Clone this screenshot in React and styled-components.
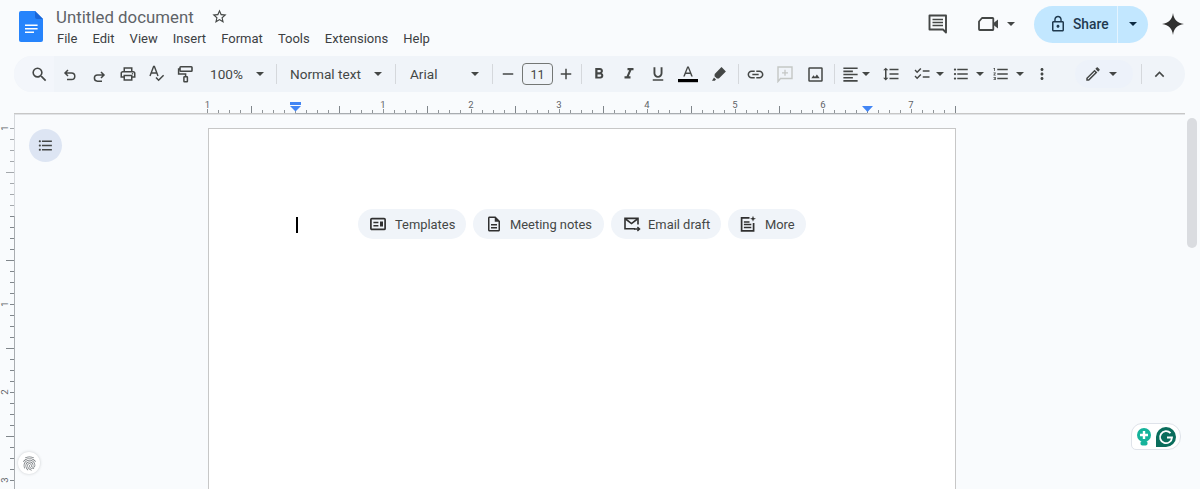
import React from "react";
import styled, { createGlobalStyle } from "styled-components";
import {
  MdSearch, MdOutlineLocalPrintshop, MdFormatBold, MdFormatItalic,
  MdFormatUnderlined, MdLink, MdFormatAlignLeft, MdFormatLineSpacing,
  MdOutlineChecklist, MdFormatListBulleted, MdFormatListNumbered, MdMoreVert, MdOutlineEdit, MdExpandLess,
  MdLockOutline, MdFingerprint, MdOutlineDescription, MdOutlineStarBorder,
  MdAdd, MdRemove,
} from "react-icons/md";

const Global = createGlobalStyle`
  html, body { margin: 0; padding: 0; height: 100%; overflow: hidden; background: #f9fbfd; }
  body { font-family: Roboto, "Liberation Sans", sans-serif; color: #444746; }
  #root { height: 100%; }
`;

const Shell = styled.div`
  position: relative; width: 1200px; height: 489px; overflow: hidden;
  display: flex; flex-direction: column; background: #f9fbfd;
`;
const Header = styled.header`
  height: 56px; flex: none; display: flex; align-items: flex-start; padding: 0 16px 0 19px; box-sizing: border-box;
`;
const Logo = styled.svg` width: 24px; height: 32px; margin-top: 10px; flex: none; `;
const TitleBlock = styled.div` margin-left: 13px; display: flex; flex-direction: column; flex: 1; `;
const TitleRow = styled.div` display: flex; align-items: center; height: 21px; margin-top: 6px; `;
const Title = styled.span` font-size: 16.8px; color: #5f6368; letter-spacing: 0.03px; `;
const StarWrap = styled.span` display: flex; margin-left: 17px; color: #444746; font-size: 17px; `;
const Menu = styled.nav` display: flex; gap: 15.1px; margin-top: 1px; height: 20px; align-items: center; margin-left: 1px; `;
const MenuItem = styled.span` font-size: 13px; color: #3c4043; `;
const HeaderRight = styled.div` display: flex; align-items: center; height: 42px; margin-top: 3px; `;
const Gap = styled.span` width: ${p => p.$w}px; flex: none; `;
const Share = styled.div`
  display: flex; height: 37px; width: 114px; margin-left: 13px; background: #c2e7ff; border-radius: 19px; color: #001d35; overflow: hidden;
`;
const ShareMain = styled.div`
  width: 84px; display: flex; align-items: center; padding-left: 15px; gap: 6px; box-sizing: border-box;
  border-right: 1px solid #e4f4ff; font-size: 13.8px; font-weight: 500; color: #1f3a4f;
`;
const ShareCaret = styled.div` flex: 1; display: flex; align-items: center; justify-content: center; `;
const Spark = styled.svg` width: 22px; height: 22px; margin-left: 14px; `;
const HeadCaret = styled.span` margin-left: 8px; `;

const Toolbar = styled.div`
  height: 36px; flex: none; margin: 0 15px 0 14px; padding-left: 11px; background: #f0f4f9; border-radius: 18px;
  display: flex; align-items: center; color: #444746; box-sizing: border-box;
`;
const Tool = styled.span`
  width: ${p => p.$w || 29}px; height: 28px; flex: none; display: flex; align-items: center; justify-content: center;
  font-size: ${p => p.$size || 18}px; color: #444746; margin-left: ${p => p.$ml || 0}px;
`;
const Triangle = styled.i`
  display: block; width: 0; height: 0; border-left: 4px solid transparent; border-right: 4px solid transparent;
  border-top: 4px solid ${p => p.$color || "#444746"};
`;
const Caret = styled.span`
  width: ${p => p.$w || 14}px; flex: none; display: flex; align-items: center; justify-content: center;
  margin-left: ${p => p.$ml || 0}px; margin-right: ${p => p.$mr || 0}px;
`;
const Sep = styled.span` width: 1px; height: 20px; background: #d5d8dc; flex: none; margin: 0 ${p => p.$mr || 0}px 0 ${p => p.$ml || 0}px; `;
const Label = styled.span` width: ${p => p.$w}px; flex: none; font-size: 13.6px; color: #444746; margin-left: ${p => p.$ml || 0}px; `;
const SizeBox = styled.span`
  width: 31px; height: 22px; box-sizing: border-box; flex: none; border: 1px solid #747775; border-radius: 4px; display: flex;
  align-items: center; justify-content: center; font-size: 12.5px; color: #444746;
`;
const SearchWash = styled.span`
  display: flex; margin-left: -11px; padding-left: 11px; border-radius: 18px 0 0 18px; background: #f3f6fb; height: 36px; align-items: center;
`;
const PenPill = styled.span`
  width: 58px; height: 28px; flex: none; margin-left: 18px; border-radius: 14px; background: #edf2fa; display: flex; align-items: center;
  padding-left: 9px; box-sizing: border-box; font-size: 18px; color: #444746;
`;

const RulerArea = styled.div` height: 22px; flex: none; `;
const RulerSvg = styled.svg` display: block; flex: none; `;
const Body = styled.div` flex: 1; min-height: 0; display: flex; `;
const Canvas = styled.main`
  flex: 1; padding: 13px 0 0 193px; min-width: 0; overflow: hidden; margin-right: 15px;
  border-top: 1px solid #e1e3e6;
`;
const Page = styled.section`
  width: 748px; height: 400px; box-sizing: border-box; background: #fff; border: 1px solid #c7c7c7; border-bottom: 0;
  padding: 80px 0 0 87px; display: flex; align-items: flex-start;
`;
const Cursor = styled.span` width: 2px; height: 16px; background: #000; margin-top: 8px; flex: none; `;
const Chips = styled.div` display: flex; gap: 7px; margin-left: 60px; `;
const Chip = styled.span`
  height: 30px; display: flex; align-items: center; gap: 7px; padding: 0 12px; border-radius: 15px; background: #f0f4f9;
  font-size: 12.9px; color: #444746; font-weight: 400; white-space: nowrap; width: ${p => p.$w}px; box-sizing: border-box;
`;
const ChipIcon = styled.span` display: flex; font-size: 18px; color: #303030; margin-right: ${p => p.$mr || 0}px; `;

const Round = styled.div`
  position: absolute; left: 29px; top: 129px; width: 33px; height: 33px; border-radius: 50%; background: #dde5f3;
  display: flex; align-items: center; justify-content: center; font-size: 17px; color: #444746;
`;
const FingerBtn = styled.div`
  position: absolute; left: 18px; top: 452px; width: 22px; height: 22px; border-radius: 50%; background: #fff;
  box-shadow: 0 0 3px rgba(60,64,67,.25); display: flex; align-items: center; justify-content: center; font-size: 17px; color: #6f7478;
`;
const Scrollbar = styled.div` position: absolute; left: 1187px; top: 118px; width: 10px; height: 130px; border-radius: 5px; background: #dadce0; `;
const Grammarly = styled.div`
  position: absolute; left: 1131px; top: 423px; width: 50px; height: 27px; box-sizing: border-box; background: #fff;
  border: 1px solid #dfe3ea; border-radius: 11px 13px 13px 5px; display: flex; align-items: center; gap: 5px; padding-left: 5px;
`;
const NudgedSvg = styled.svg` margin-top: 4px; `;

const DocLogo = () => (
  <Logo viewBox="0 0 24 32">
    <path d="M2 1h14l8 8v21a2 2 0 0 1-2 2H2a2 2 0 0 1-2-2V3a2 2 0 0 1 2-2z" fill="#2684fc" />
    <path d="M16 1l8 8h-6a2 2 0 0 1-2-2z" fill="#1a66d8" />
    <path d="M6 14.5h12.6v1.5H6zM6 18h12.6v1.5H6zM6 21.6h9v1.5H6z" fill="#fff" />
  </Logo>
);

const CommentIcon = () => (
  <svg width="20" height="20" viewBox="0 0 20 20" fill="none">
    <path d="M1.5 1.5h16.5v17l-3-3H1.5z" stroke="#444746" strokeWidth="1.9" strokeLinejoin="round" />
    <path d="M4.5 5.5h10.5M4.5 8.5h10.5M4.5 11.5h10.5" stroke="#444746" strokeWidth="1.7" />
  </svg>
);
const VideoIcon = () => (
  <svg width="22" height="16" viewBox="0 0 22 16" fill="none">
    <path d="M5 2h10.5a.8.8 0 0 1 .8.8v10.4a.8.8 0 0 1-.8.8H2.8a.8.8 0 0 1-.8-.8V5.5z" stroke="#444746" strokeWidth="1.8" strokeLinejoin="round" />
    <path d="M16.5 7l4.5-3.5v9L16.5 9z" fill="#444746" />
  </svg>
);
const UndoIcon = () => (
  <NudgedSvg width="14" height="14" viewBox="0 0 14 14" fill="none">
    <path d="M5 1L2 4l3 3M2.3 4h6.2a3.3 3.3 0 0 1 0 6.6H4" stroke="#444746" strokeWidth="1.5" />
  </NudgedSvg>
);
const RedoIcon = () => (
  <NudgedSvg width="14" height="14" viewBox="0 0 14 14" fill="none">
    <path d="M9 3L12 6l-3 3M11.7 6H5.5a3 3 0 0 0 0 6.2H10" stroke="#444746" strokeWidth="1.5" />
  </NudgedSvg>
);
const SpellIcon = () => (
  <svg width="18" height="18" viewBox="0 0 18 18" fill="none">
    <path d="M2 11L5.6 1.5h.8L10 11M3.4 8h5.2" stroke="#444746" strokeWidth="1.4" />
    <path d="M8 12.5l2.6 2.7 5-5" stroke="#444746" strokeWidth="1.5" />
  </svg>
);
const PaintIcon = () => (
  <svg width="18" height="18" viewBox="0 0 18 18" fill="none">
    <rect x="3" y="1.8" width="12" height="4.4" rx=".7" stroke="#444746" strokeWidth="1.6" />
    <path d="M3 4H1.6v5H8.6v3" stroke="#444746" strokeWidth="1.5" />
    <rect x="6.9" y="11.8" width="3.5" height="5" rx=".5" stroke="#444746" strokeWidth="1.5" />
  </svg>
);
const MarkerIcon = () => (
  <svg width="16" height="16" viewBox="0 0 16 16">
    <path d="M10.5 1l4.4 4.4-7 7-2 .2-2.4-2.4.2-2.2z" fill="#444746" />
    <path d="M3 11.5l2 2-1.2 1.3H1z" fill="#444746" />
  </svg>
);
const AddCommentIcon = () => (
  <svg width="16" height="17" viewBox="0 0 16 17" fill="none">
    <path d="M1 1h14v11.5H3.5L1 15.5z" stroke="#c4c7c5" strokeWidth="1.4" />
    <path d="M8 3.8v6M5 6.8h6" stroke="#c4c7c5" strokeWidth="1.3" />
  </svg>
);
const ImageIcon = () => (
  <svg width="15" height="15" viewBox="0 0 15 15" fill="none">
    <rect x="1" y="1" width="13" height="13" rx=".6" stroke="#444746" strokeWidth="1.5" />
    <path d="M3.3 11.3l2.2-3 1.5 1.7 1.9-2.6 2.8 3.9z" fill="#444746" />
  </svg>
);
const TemplatesIcon = () => (
  <svg width="16" height="18" viewBox="0 0 16 18" fill="none">
    <rect x=".9" y="3.6" width="14.2" height="10.8" rx="1" stroke="#303030" strokeWidth="1.7" />
    <path d="M3.4 6.8h5v1.5h-5zM3.4 9.9h5v1.5h-5zM10 6.6h3v4.9h-3z" fill="#303030" />
  </svg>
);
const MailIcon = () => (
  <svg width="18" height="18" viewBox="0 0 18 18" fill="none">
    <path d="M12 13.8H2V3.4h13v6.2" stroke="#303030" strokeWidth="1.6" />
    <path d="M2.6 4l5.9 4.6L14.4 4" stroke="#303030" strokeWidth="1.6" />
    <path d="M11 14h5.5M14.4 11.9l2.2 2.1-2.2 2.1" stroke="#303030" strokeWidth="1.4" />
  </svg>
);
const MoreDocIcon = () => (
  <svg width="16" height="18" viewBox="0 0 16 18" fill="none">
    <path d="M9.5 2.8H1.6v13h12V8" stroke="#303030" strokeWidth="1.7" />
    <path d="M3.9 7h5.6M3.9 9.6h7.4M3.9 12.4h7.4" stroke="#303030" strokeWidth="1.5" />
    <path d="M13 .8l.8 2.2 2.2.8-2.2.8-.8 2.2-.8-2.2-2.2-.8 2.2-.8z" fill="#303030" />
  </svg>
);
const TextColor = () => (
  <svg width="22" height="18" viewBox="0 0 22 18">
    <path d="M10.2 1.4h1.6l4 10h-1.6l-.9-2.5H8.7l-.9 2.5H6.2zM9.2 7.6h3.6L11 3z" fill="#444746" />
    <rect x="1" y="14" width="20" height="3.2" fill="#000" />
  </svg>
);

const menus = ["File", "Edit", "View", "Insert", "Format", "Tools", "Extensions", "Help"];

const hInches = [[207.5, "1"], [383, "1"], [471, "2"], [559, "3"], [647, "4"], [735, "5"], [823, "6"], [911, "7"]];
const HRuler = () => {
  const ticks = [];
  for (let i = 0; i <= 68; i++) {
    const x = 207 + i * 11;
    const half = i % 8 === 4;
    const inch = i % 8 === 0;
    const end = i === 68;
    const y = end || half ? 14 : inch ? 17 : 18;
    ticks.push(<rect key={i} x={x} y={y} width="1" height={21 - y} fill={half || end ? "#80868b" : "#8f9498"} />);
  }
  return (
    <RulerSvg width="1200" height="22" viewBox="0 0 1200 22">
      {ticks}
      {hInches.map(([x, t], i) => (
        <text key={i} x={x} y="16" textAnchor="middle" fontSize="9.5" fill="#5f6368" fontFamily="Roboto, sans-serif">{t}</text>
      ))}
      <rect x="14" y="21" width="1171" height="1" fill="#c7c7c7" />
      <rect x="295" y="21" width="572" height="1" fill="#a9adb1" />
      <rect x="290" y="10" width="11" height="3" fill="#4285f4" />
      <path d="M290 14h11l-5.5 5.5z" fill="#4285f4" />
      <path d="M862 14h11l-5.5 6z" fill="#4285f4" />
    </RulerSvg>
  );
};

const vLabels = [[128, "1"], [304, "1"], [392, "2"], [480, "3"]];
const VRuler = () => {
  const ticks = [];
  for (let i = 0; i <= 32; i++) {
    const y = 128 - 114 + i * 11;
    const half = i % 8 === 4;
    const x = half ? 6 : 10;
    ticks.push(<rect key={i} x={x} y={y} width={14 - x} height="1" fill={i < 8 ? "#a4a8ac" : "#80868b"} />);
  }
  return (
    <RulerSvg width="15" height="375" viewBox="0 0 15 375">
      <rect x="14" y="0" width="1" height="102" fill="#d5d8dc" />
      <rect x="14" y="102" width="1" height="273" fill="#a9adb1" />
      {ticks}
      {vLabels.map(([y, t], i) => (
        <text key={i} x="0" y="0" transform={`translate(8 ${y - 114}) rotate(-90)`} textAnchor="middle" fontSize="9.5" fill="#5f6368" fontFamily="Roboto, sans-serif">{t}</text>
      ))}
    </RulerSvg>
  );
};

export default function App() {
  return (
    <Shell>
      <Global />
      <Header>
        <DocLogo />
        <TitleBlock>
          <TitleRow>
            <Title>Untitled document</Title>
            <StarWrap><MdOutlineStarBorder /></StarWrap>
          </TitleRow>
          <Menu>{menus.map(m => <MenuItem key={m}>{m}</MenuItem>)}</Menu>
        </TitleBlock>
        <HeaderRight>
          <CommentIcon />
          <Gap $w={29} />
          <VideoIcon />
          <HeadCaret><Triangle /></HeadCaret>
          <Gap $w={6} />
          <Share>
            <ShareMain><MdLockOutline size={18} /> Share</ShareMain>
            <ShareCaret><Triangle $color="#0b2a42" /></ShareCaret>
          </Share>
          <Spark viewBox="0 0 22 22"><path d="M11 0c.8 6 4 10.2 11 11-7 .8-10.2 5-11 11-.8-6-4-10.2-11-11 7-.8 10.2-5 11-11z" fill="#303030" /></Spark>
        </HeaderRight>
      </Header>

      <Toolbar>
        <SearchWash><Tool $size={19}><MdSearch /></Tool></SearchWash>
        <Tool $w={32}><UndoIcon /></Tool>
        <Tool $w={26}><RedoIcon /></Tool>
        <Tool $w={32}><MdOutlineLocalPrintshop /></Tool>
        <Tool $w={26}><SpellIcon /></Tool>
        <Tool $w={32}><PaintIcon /></Tool>
        <Label $w={43} $ml={8}>100%</Label>
        <Caret><Triangle /></Caret>
        <Sep $ml={9} $mr={13} />
        <Label $w={81}>Normal text</Label>
        <Caret><Triangle /></Caret>
        <Sep $ml={10} $mr={14} />
        <Label $w={58}>Arial</Label>
        <Caret><Triangle /></Caret>
        <Sep $ml={10} />
        <Tool><MdRemove /></Tool>
        <SizeBox>11</SizeBox>
        <Tool $w={26}><MdAdd /></Tool>
        <Sep $ml={2} />
        <Tool $ml={2}><MdFormatBold /></Tool>
        <Tool $w={31}><MdFormatItalic /></Tool>
        <Tool $w={28}><MdFormatUnderlined /></Tool>
        <Tool $w={32}><TextColor /></Tool>
        <Tool $w={30}><MarkerIcon /></Tool>
        <Sep $ml={4} />
        <Tool $ml={2} $size={19}><MdLink /></Tool>
        <Tool $w={30}><AddCommentIcon /></Tool>
        <Tool $w={30}><ImageIcon /></Tool>
        <Sep $ml={4} />
        <Tool $w={30} $size={19}><MdFormatAlignLeft /></Tool>
        <Caret $w={10} $ml={-4} $mr={5}><Triangle /></Caret>
        <Tool $w={30}><MdFormatLineSpacing /></Tool>
        <Tool $w={30} $ml={1}><MdOutlineChecklist /></Tool>
        <Caret $w={12} $ml={-3}><Triangle /></Caret>
        <Tool $w={30}><MdFormatListBulleted /></Tool>
        <Caret $w={12} $ml={-2}><Triangle /></Caret>
        <Tool $w={30}><MdFormatListNumbered /></Tool>
        <Caret $w={12} $ml={-2}><Triangle /></Caret>
        <Tool $w={30} $ml={1}><MdMoreVert /></Tool>
        <PenPill><MdOutlineEdit /><Caret $w={16} $ml={3}><Triangle /></Caret></PenPill>
        <Sep $ml={8} />
        <Tool $w={35} $size={19}><MdExpandLess /></Tool>
      </Toolbar>

      <RulerArea><HRuler /></RulerArea>

      <Body>
        <VRuler />
        <Canvas>
          <Page>
            <Cursor />
            <Chips>
              <Chip $w={108}><ChipIcon $mr={2}><TemplatesIcon /></ChipIcon>Templates</Chip>
              <Chip $w={131}><ChipIcon><MdOutlineDescription /></ChipIcon>Meeting notes</Chip>
              <Chip $w={110}><ChipIcon><MailIcon /></ChipIcon>Email draft</Chip>
              <Chip $w={78}><ChipIcon $mr={2}><MoreDocIcon /></ChipIcon>More</Chip>
            </Chips>
          </Page>
        </Canvas>
      </Body>

      <Round><MdFormatListBulleted /></Round>
      <FingerBtn><MdFingerprint /></FingerBtn>
      <Scrollbar />
      <Grammarly>
        <svg width="14" height="18" viewBox="0 0 14 18">
          <circle cx="7" cy="7" r="7" fill="#15b39b" />
          <rect x="3.5" y="13" width="7" height="4.6" rx="1.8" fill="#15b39b" />
          <path d="M5.8 3h2.4v2.8H11v2.4H8.2V11H5.8V8.2H3V5.8h2.8z" fill="#fff" />
        </svg>
        <svg width="20" height="20" viewBox="0 0 20 20">
          <path d="M10 0a10 10 0 0 1 0 20H0V10A10 10 0 0 1 10 0z" fill="#0a6d5c" />
          <path d="M14.5 6.2A6 6 0 1 0 16 10.5h-5" fill="none" stroke="#fff" strokeWidth="1.8" />
        </svg>
      </Grammarly>
    </Shell>
  );
}
